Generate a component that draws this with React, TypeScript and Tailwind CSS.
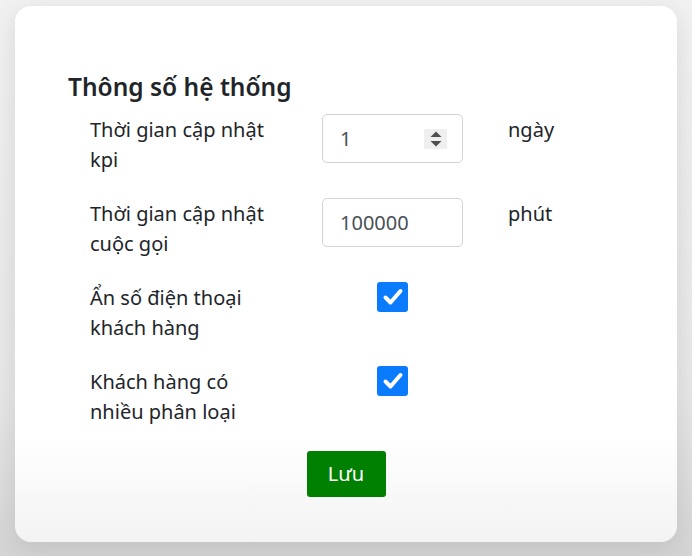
import React from "react";

const font = { fontFamily: '"Noto Sans", "Open Sans", Arial, sans-serif' };

function Check() {
  return (
    <div className="w-[31px] h-[30px] rounded-[3px] bg-[#0b7bfe] flex items-center justify-center">
      <svg width="24" height="24" viewBox="0 0 24 24" fill="none">
        <path d="M4.5 12.5 L9.5 17.5 L19.5 6" stroke="white" strokeWidth="4" strokeLinecap="round" strokeLinejoin="round" />
      </svg>
    </div>
  );
}

function Spinner() {
  return (
    <div className="w-[23px] h-[20px] bg-[#efefef] flex flex-col items-center justify-center gap-[4px]">
      <svg width="12" height="6" viewBox="0 0 12 6">
        <path d="M0.5 6 L6 0.5 L11.5 6 Z" fill="#4f4f4f" />
      </svg>
      <svg width="12" height="6" viewBox="0 0 12 6">
        <path d="M0.5 0 L6 5.5 L11.5 0 Z" fill="#4f4f4f" />
      </svg>
    </div>
  );
}

function Row({ label, children, unit }: { label: string; children: React.ReactNode; unit?: string }) {
  return (
    <div className="grid grid-cols-[210px_141px_auto] gap-x-[22px] h-[60px]">
      <div className="w-[190px] text-[20px] leading-[30px] text-[#212529]">{label}</div>
      <div className="flex justify-center items-start">{children}</div>
      <div className="pl-[23px] text-[20px] leading-[30px] text-[#212529]">{unit}</div>
    </div>
  );
}

export default function App() {
  return (
    <div style={font} className="w-[692px] h-[556px] bg-[linear-gradient(180deg,#f1f1f1_0%,#e7e7e7_70%,#d4d4d4_100%)] pt-[6px] px-[15px] overflow-hidden">
      <div className="h-[536px] rounded-[16px] bg-[linear-gradient(180deg,#ffffff_0%,#ffffff_80%,#f3f3f3_100%)] shadow-[0_6px_24px_rgba(0,0,0,0.10)] pl-[53px] pt-[63px]">
        <h4 className="text-[24.5px] leading-[36px] font-semibold text-[#212529]">Thông số hệ thống</h4>
        <div className="pl-[22px] mt-[10px] flex flex-col gap-[24px]">
          <Row label="Thời gian cập nhật kpi" unit="ngày">
            <div className="w-[141px] h-[49px] -mt-[1px] rounded-[5px] border border-[#ced4da] flex items-center justify-between pl-[17px] pr-[15px] text-[20px] text-[#495057]">
              <span>1</span>
              <Spinner />
            </div>
          </Row>
          <Row label="Thời gian cập nhật cuộc gọi" unit="phút">
            <div className="w-[141px] h-[49px] -mt-[1px] rounded-[5px] border border-[#ced4da] flex items-center pl-[17px] text-[20px] text-[#495057]">
              100000
            </div>
          </Row>
          <Row label="Ẩn số điện thoại khách hàng">
            <div className="-mt-[1px]">
              <Check />
            </div>
          </Row>
          <Row label="Khách hàng có nhiều phân loại">
            <div className="-mt-[1px]">
              <Check />
            </div>
          </Row>
        </div>
        <div className="flex justify-center mt-[24px] pr-[53px]">
          <button className="w-[79px] h-[46px] rounded-[3px] bg-[#008000] text-white text-[20px]">Lưu</button>
        </div>
      </div>
    </div>
  );
}
